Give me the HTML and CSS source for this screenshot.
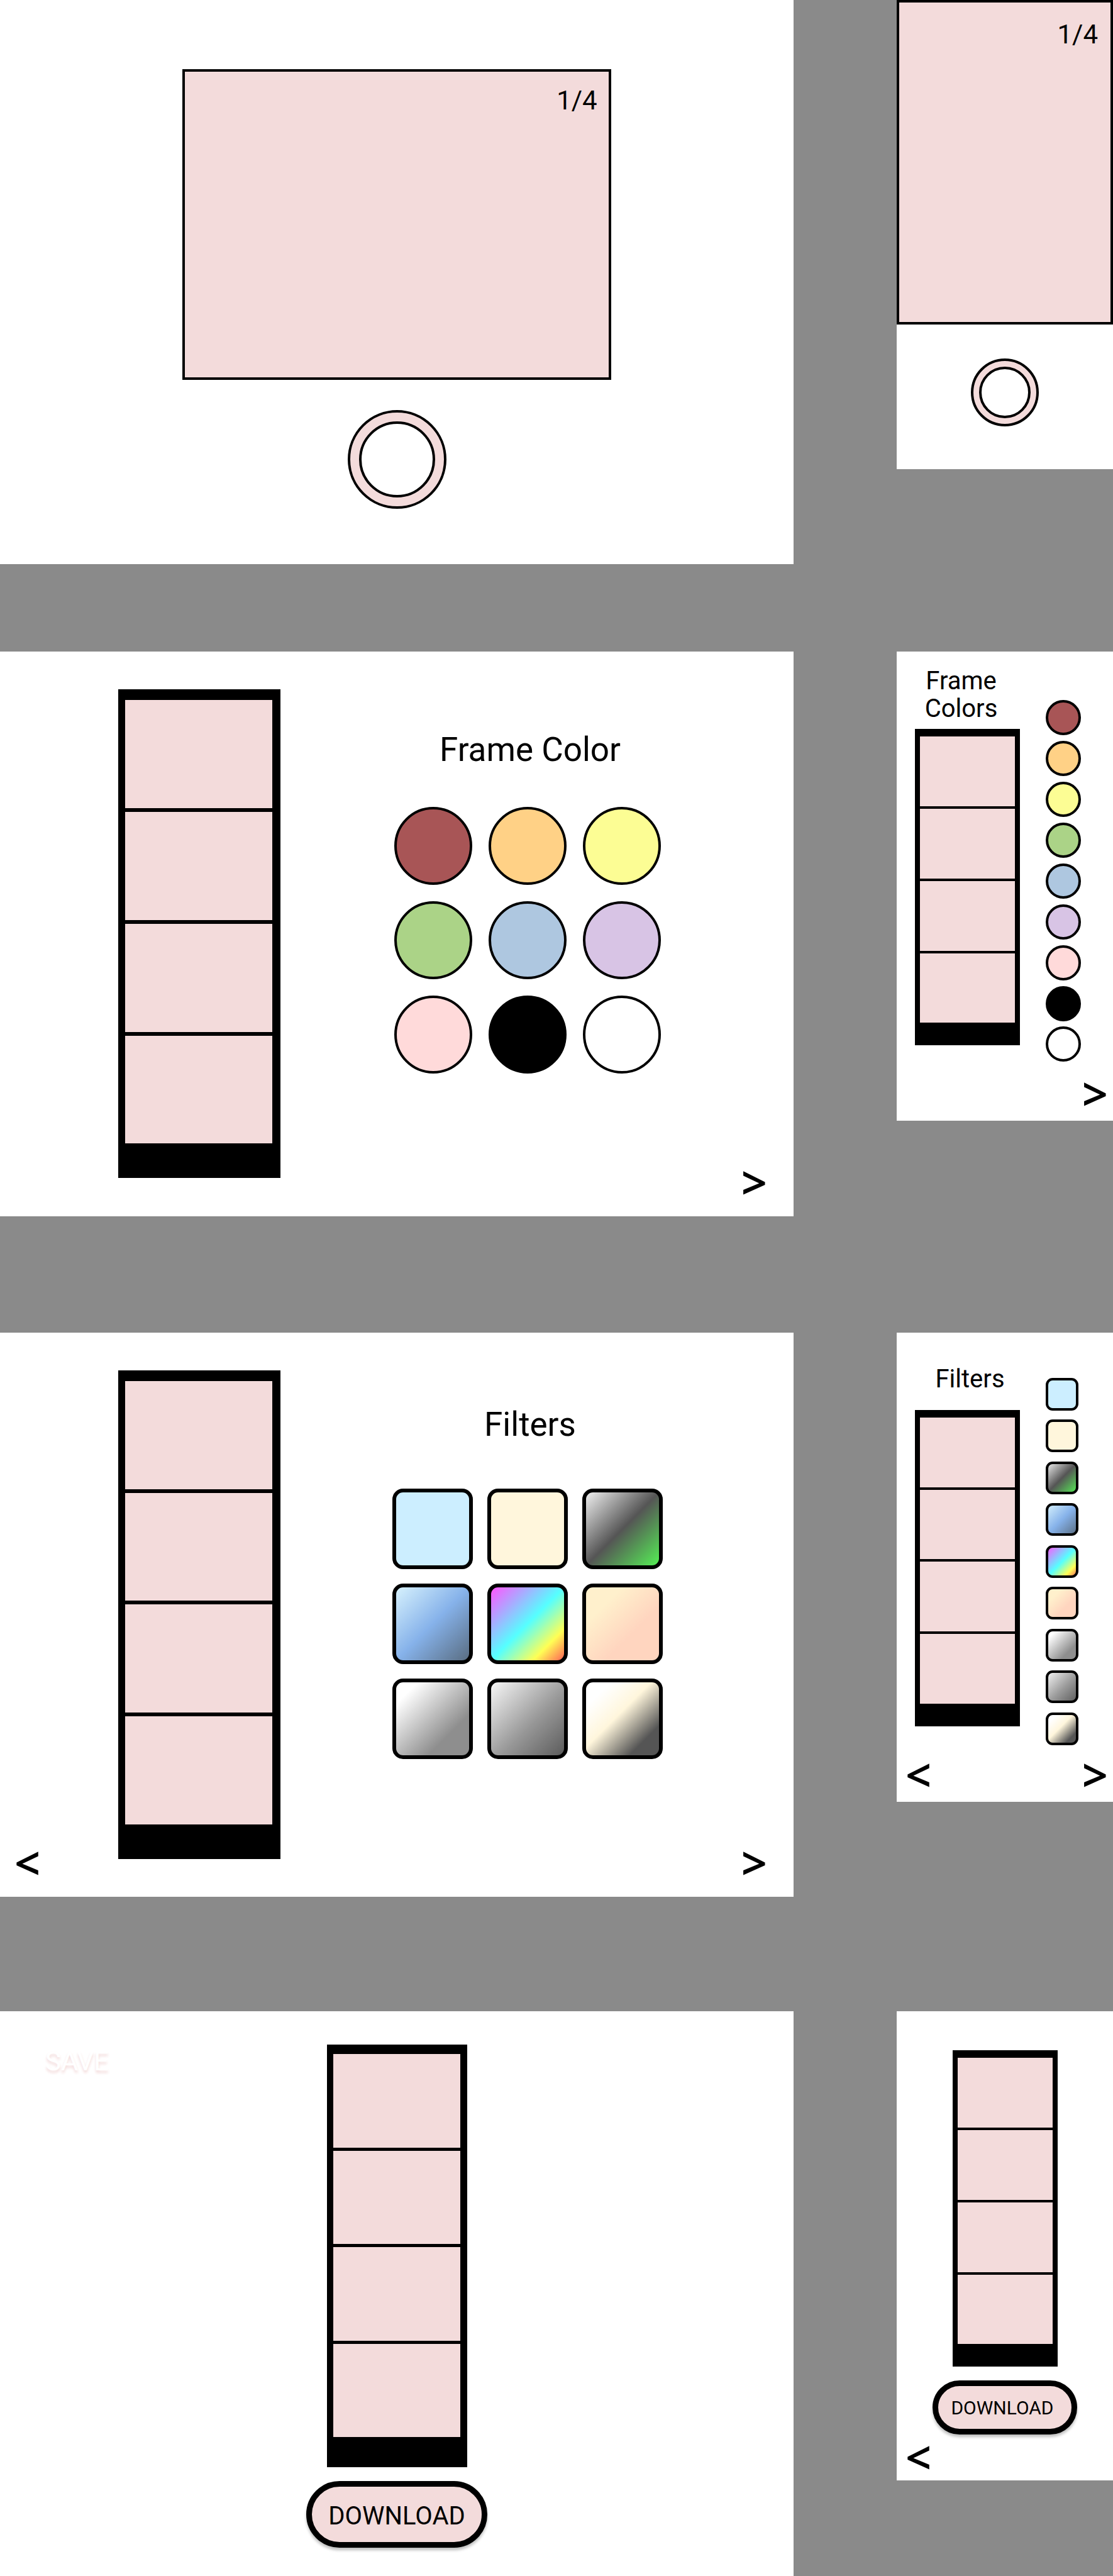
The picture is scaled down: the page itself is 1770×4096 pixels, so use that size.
FILE: index.html
```html
<!DOCTYPE html>
<html lang="en">
<head>
<meta charset="utf-8">
<meta name="viewport" content="width=device-width, initial-scale=1">
<title>Photo Booth</title>
<link rel="stylesheet" href="styles.css">
</head>
<body>
<main class="board">

  <section class="row">
    <article class="screen desktop camera">
      <div class="viewfinder"><p class="counter">1/4</p></div>
      <button class="shutter" type="button" aria-label="Take photo"><span class="shutter-core"></span></button>
    </article>
    <article class="screen mobile camera">
      <div class="viewfinder"><p class="counter">1/4</p></div>
      <button class="shutter" type="button" aria-label="Take photo"><span class="shutter-core"></span></button>
    </article>
  </section>

  <section class="row">
    <article class="screen desktop editor">
      <div class="strip"><span class="photo"></span><span class="photo"></span><span class="photo"></span><span class="photo"></span></div>
      <div class="controls colors">
        <h2 class="title">Frame Color</h2>
        <div class="choices">
          <button class="swatch red" type="button" aria-label="Red"></button>
          <button class="swatch orange" type="button" aria-label="Orange"></button>
          <button class="swatch yellow" type="button" aria-label="Yellow"></button>
          <button class="swatch green" type="button" aria-label="Green"></button>
          <button class="swatch blue" type="button" aria-label="Blue"></button>
          <button class="swatch purple" type="button" aria-label="Purple"></button>
          <button class="swatch pink" type="button" aria-label="Pink"></button>
          <button class="swatch black" type="button" aria-label="Black"></button>
          <button class="swatch white" type="button" aria-label="White"></button>
        </div>
      </div>
      <button class="arrow next" type="button" aria-label="Next">&gt;</button>
    </article>
    <article class="screen mobile editor">
      <div class="workspace">
        <div class="preview colors">
          <h2 class="title">Frame<br>Colors</h2>
          <div class="strip"><span class="photo"></span><span class="photo"></span><span class="photo"></span><span class="photo"></span></div>
        </div>
        <div class="choices colors">
          <button class="swatch red" type="button" aria-label="Red"></button>
          <button class="swatch orange" type="button" aria-label="Orange"></button>
          <button class="swatch yellow" type="button" aria-label="Yellow"></button>
          <button class="swatch green" type="button" aria-label="Green"></button>
          <button class="swatch blue" type="button" aria-label="Blue"></button>
          <button class="swatch purple" type="button" aria-label="Purple"></button>
          <button class="swatch pink" type="button" aria-label="Pink"></button>
          <button class="swatch black" type="button" aria-label="Black"></button>
          <button class="swatch white" type="button" aria-label="White"></button>
        </div>
      </div>
      <nav class="steps">
        <button class="arrow next" type="button" aria-label="Next">&gt;</button>
      </nav>
    </article>
  </section>

  <section class="row">
    <article class="screen desktop editor">
      <button class="arrow prev" type="button" aria-label="Back">&lt;</button>
      <div class="strip"><span class="photo"></span><span class="photo"></span><span class="photo"></span><span class="photo"></span></div>
      <div class="controls filters">
        <h2 class="title">Filters</h2>
        <div class="choices">
          <button class="filter cool" type="button" aria-label="Cool"></button>
          <button class="filter warm" type="button" aria-label="Warm"></button>
          <button class="filter night" type="button" aria-label="Night vision"></button>
          <button class="filter dusk" type="button" aria-label="Dusk"></button>
          <button class="filter rainbow" type="button" aria-label="Rainbow"></button>
          <button class="filter peach" type="button" aria-label="Peach"></button>
          <button class="filter silver" type="button" aria-label="Silver"></button>
          <button class="filter mono" type="button" aria-label="Monochrome"></button>
          <button class="filter vintage" type="button" aria-label="Vintage"></button>
        </div>
      </div>
      <button class="arrow next" type="button" aria-label="Next">&gt;</button>
    </article>
    <article class="screen mobile editor">
      <div class="workspace">
        <div class="preview filters">
          <h2 class="title">Filters</h2>
          <div class="strip"><span class="photo"></span><span class="photo"></span><span class="photo"></span><span class="photo"></span></div>
        </div>
        <div class="choices filters">
          <button class="filter cool" type="button" aria-label="Cool"></button>
          <button class="filter warm" type="button" aria-label="Warm"></button>
          <button class="filter night" type="button" aria-label="Night vision"></button>
          <button class="filter dusk" type="button" aria-label="Dusk"></button>
          <button class="filter rainbow" type="button" aria-label="Rainbow"></button>
          <button class="filter peach" type="button" aria-label="Peach"></button>
          <button class="filter silver" type="button" aria-label="Silver"></button>
          <button class="filter mono" type="button" aria-label="Monochrome"></button>
          <button class="filter vintage" type="button" aria-label="Vintage"></button>
        </div>
      </div>
      <nav class="steps">
        <button class="arrow prev" type="button" aria-label="Back">&lt;</button>
        <button class="arrow next" type="button" aria-label="Next">&gt;</button>
      </nav>
    </article>
  </section>

  <section class="row">
    <article class="screen desktop result">
      <h2 class="save">SAVE</h2>
      <div class="output">
        <div class="strip"><span class="photo"></span><span class="photo"></span><span class="photo"></span><span class="photo"></span></div>
        <button class="download" type="button">DOWNLOAD</button>
      </div>
    </article>
    <article class="screen mobile result">
      <div class="output">
        <div class="strip"><span class="photo"></span><span class="photo"></span><span class="photo"></span><span class="photo"></span></div>
        <button class="download" type="button">DOWNLOAD</button>
      </div>
      <nav class="steps">
        <button class="arrow prev" type="button" aria-label="Back">&lt;</button>
      </nav>
    </article>
  </section>

</main>
</body>
</html>
```
FILE: styles.css
```css
:root {
  --pink: #f3dbdb;
  --ink: #000;
}

*, *::before, *::after { box-sizing: border-box; }

body {
  margin: 0;
  background: #8a8a8a;
  color: var(--ink);
  font-family: Roboto, "Liberation Sans", sans-serif;
}

h2, p { margin: 0; font-weight: 400; }

button {
  margin: 0;
  padding: 0;
  border: 0;
  background: none;
  color: inherit;
  font-family: inherit;
  cursor: pointer;
}

/* Board: one row per step, desktop on the left and mobile on the right */
.row {
  display: grid;
  grid-template-columns: 1262fr 344fr;
  column-gap: 164px;
  align-items: start;
}
.row:nth-child(2) { margin-top: 139px; }
.row:nth-child(3) { margin-top: 185px; }
.row:nth-child(4) { margin-top: 182px; }

.screen { background: #fff; }
.desktop { aspect-ratio: 1440 / 1024; }
.mobile { aspect-ratio: 393 / 852; }

/* Camera */
.camera {
  display: flex;
  flex-direction: column;
  align-items: center;
}
.viewfinder {
  border: 4px solid var(--ink);
  background: var(--pink);
  text-align: right;
}
.counter { font-size: 42px; line-height: 48px; }
.shutter {
  display: flex;
  border: 4px solid var(--ink);
  border-radius: 50%;
  background: var(--pink);
}
.shutter-core {
  flex: 1;
  border: 4px solid var(--ink);
  border-radius: 50%;
  background: #fff;
}
.desktop.camera { padding-top: 110px; gap: 48px; }
.desktop .viewfinder { width: 54%; height: 494px; padding: 22px 18px; }
.desktop .shutter { width: 157px; height: 157px; padding: 14px; }
.mobile.camera { gap: 54px; }
.mobile .viewfinder { width: 100%; height: 516px; padding: 27px 20px; }
.mobile .shutter { width: 108px; height: 108px; padding: 9px; }

/* Photo strip */
.strip {
  display: grid;
  grid-template-rows: repeat(4, 1fr);
  background: var(--ink);
}
.photo { background: var(--pink); }
.desktop .strip { gap: 6px; padding: 17px 13px 55px 11px; }
.mobile .strip { width: 167px; height: 503px; gap: 4px; padding: 12px 8px 36px; }

/* Titles */
.title { text-align: center; }
.desktop .title { font-size: 53px; line-height: 60px; text-indent: 8px; }
.mobile .title { font-size: 40px; line-height: 44px; }

/* Arrows */
.arrow {
  font-family: "Noto Sans", sans-serif;
  font-size: 72px;
  font-weight: 600;
  line-height: 40px;
}

/* Editor, desktop */
.desktop.editor {
  display: grid;
  grid-template-columns: 188fr 258fr 178fr 430fr 208fr;
  grid-template-rows: 1fr;
  align-items: start;
}
.desktop.editor .strip {
  grid-area: 1 / 2;
  height: 777px;
  margin-top: 60px;
}
.controls {
  grid-area: 1 / 4;
  display: flex;
  flex-direction: column;
}
.controls.colors { padding-top: 126px; gap: 61px; }
.controls.filters { padding-top: 116px; gap: 72px; }
.controls .choices {
  display: grid;
  justify-content: center;
}
.controls.colors .choices { grid-template-columns: repeat(3, 124px); gap: 26px; }
.controls.filters .choices { grid-template-columns: repeat(3, 128px); gap: 23px; }
.desktop .arrow { align-self: end; margin: 0 42px 35px 23px; }
.desktop .prev { grid-area: 1 / 1; justify-self: start; }
.desktop .next { grid-area: 1 / 5; justify-self: end; }

/* Editor, mobile */
.mobile.editor, .mobile.result {
  display: flex;
  flex-direction: column;
}
.workspace {
  display: flex;
  gap: 41px;
  padding-left: 29px;
}
.preview .title {
  display: flex;
  flex-direction: column;
  justify-content: flex-end;
  height: 123px;
}
.preview.colors .title { padding: 0 20px 10px 0; }
.preview.filters .title { padding: 0 0 27px 8px; }
.mobile .choices {
  display: flex;
  flex-direction: column;
  justify-content: space-between;
}
.mobile .choices.colors { height: 575px; margin-top: 77px; }
.mobile .choices.filters { height: 584px; margin-top: 72px; }
.steps {
  display: flex;
  margin-top: auto;
  padding: 0 8px 24px 14px;
}
.steps .next { margin-left: auto; }

/* Swatches */
.swatch {
  aspect-ratio: 1;
  border: 4px solid var(--ink);
  border-radius: 50%;
}
.mobile .swatch { width: 56px; }
.red { background: #a85556; }
.orange { background: #ffd186; }
.yellow { background: #fcfd94; }
.green { background: #abd387; }
.blue { background: #aec7e0; }
.purple { background: #d8c4e5; }
.pink { background: #ffdada; }
.black { background: #000; }
.white { background: #fff; }

/* Filters */
.filter {
  aspect-ratio: 1;
  border: 6px solid var(--ink);
  border-radius: 17px;
  background-origin: border-box;
}
.mobile .filter { width: 52px; border-width: 4px; border-radius: 11px; }
.cool { background-color: #cceeff; }
.warm { background-color: #fff6dc; }
.night { background-image: linear-gradient(135deg, #fff, #555 50%, #5f5); }
.dusk { background-image: linear-gradient(135deg, #dff8ff, #86b2ea 50%, #556677); }
.rainbow { background-image: linear-gradient(135deg, #ff55ff 5%, #55ffff 50%, #ffff55 76%, #ff5555 97%); }
.peach { background-image: linear-gradient(135deg, #fff0cc 27%, #ffd5bf 62%); }
.silver { background-image: linear-gradient(135deg, #fff 18%, #8e8e8e 70%); }
.mono { background-image: linear-gradient(135deg, #fff, #999 55%, #555); }
.vintage { background-image: linear-gradient(135deg, #fff 20%, #fff6dc 45%, #555 77%); }

/* Result */
.desktop.result {
  display: grid;
  grid-template-columns: 1fr auto 1fr;
  align-items: start;
}
.save {
  padding: 58px 0 0 72px;
  color: #fff;
  font-size: 42px;
  line-height: 44px;
  text-shadow: 0 4px 4px var(--pink);
}
.output {
  display: flex;
  flex-direction: column;
  align-items: center;
  gap: 22px;
}
.desktop .output { padding-top: 53px; }
.desktop .output .strip {
  width: 223px;
  height: 672px;
  gap: 5px;
  padding: 15px 11px 48px 10px;
}
.mobile .output { padding-top: 62px; }
.download {
  border: 9px solid var(--ink);
  border-radius: 53px;
  background: var(--pink);
  box-shadow: 0 4px 4px rgba(0, 0, 0, 0.25);
}
.desktop .download { width: 288px; height: 106px; padding-top: 4px; font-size: 40px; }
.mobile .download { width: 230px; height: 86px; padding-right: 8px; font-size: 30px; }
.mobile.result .steps { padding-bottom: 18px; }
```
